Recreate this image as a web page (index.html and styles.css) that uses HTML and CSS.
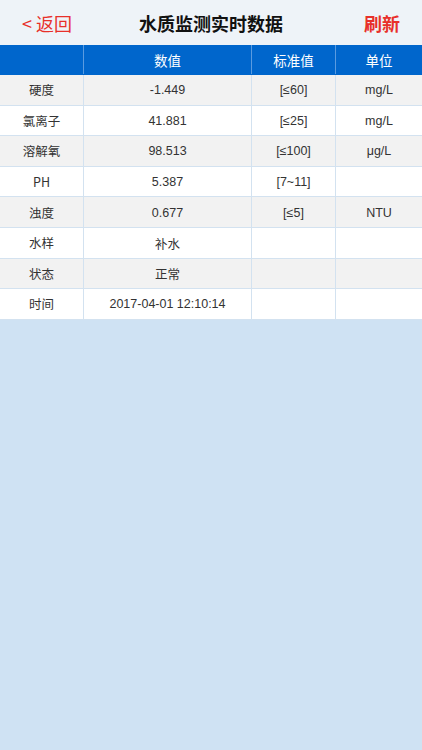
FILE: index.html
```html
<!DOCTYPE html>
<html lang="zh">
<head>
<meta charset="utf-8">
<link rel="stylesheet" href="styles.css">
</head>
<body>
<div class="page">
  <header class="nav">
    <span class="back">&lt; 返回</span>
    <span class="title">水质监测实时数据</span>
    <span class="refresh">刷新</span>
  </header>
  <div class="table">
    <div class="row head"><div></div><div>数值</div><div>标准值</div><div>单位</div></div>
    <div class="row odd"><div>硬度</div><div>-1.449</div><div>[≤60]</div><div>mg/L</div></div>
    <div class="row"><div>氯离子</div><div>41.881</div><div>[≤25]</div><div>mg/L</div></div>
    <div class="row odd"><div>溶解氧</div><div>98.513</div><div>[≤100]</div><div>μg/L</div></div>
    <div class="row"><div>PH</div><div>5.387</div><div>[7~11]</div><div></div></div>
    <div class="row odd"><div>浊度</div><div>0.677</div><div>[≤5]</div><div>NTU</div></div>
    <div class="row"><div>水样</div><div>补水</div><div></div><div></div></div>
    <div class="row odd"><div>状态</div><div>正常</div><div></div><div></div></div>
    <div class="row"><div>时间</div><div>2017-04-01 12:10:14</div><div></div><div></div></div>
  </div>
</div>
</body>
</html>
```
FILE: styles.css
```css
html, body {
  margin: 0;
  padding: 0;
}
body {
  background: #cfe2f3;
  font-family: "Noto Sans CJK SC", "Liberation Sans", sans-serif;
}
.page {
  width: 422px;
}
.nav {
  height: 45px;
  background: #eef3f8;
  display: flex;
  align-items: center;
  justify-content: space-between;
  padding: 0 22px 0 22px;
  box-sizing: border-box;
}
.back {
  color: #e8302a;
  font-size: 18px;
  width: 70px;
}
.title {
  color: #111;
  font-size: 18px;
  font-weight: bold;
}
.refresh {
  color: #e8302a;
  font-size: 18px;
  font-weight: bold;
  width: 70px;
  text-align: right;
}
.table {
  display: flex;
  flex-direction: column;
}
.row {
  display: grid;
  grid-template-columns: 84px 168px 84px 86px;
  height: 30.6px;
  background: #fff;
  box-sizing: border-box;
  border-bottom: 1px solid #d3e2f0;
}
.row.odd {
  background: #f2f2f2;
}
.row > div {
  display: flex;
  align-items: center;
  justify-content: center;
  padding-top: 1px;
  font-size: 12.5px;
  color: #333;
  border-right: 1px solid #d3e2f0;
  font-family: "Liberation Sans", "Noto Sans CJK SC", sans-serif;
}
.row > div:first-child {
  font-family: "Noto Sans CJK SC", sans-serif;
  padding-top: 0;
}
.row > div:last-child {
  border-right: none;
}
.row.head {
  height: 30px;
  background: #0066cc;
  border-bottom: 1px solid #0066cc;
}
.row.head > div {
  color: #fff;
  font-size: 13.5px;
  padding-top: 0;
  font-family: "Noto Sans CJK SC", sans-serif;
  border-right: 1px solid #5a9be0;
}
.row.head > div:last-child {
  border-right: none;
}
```
